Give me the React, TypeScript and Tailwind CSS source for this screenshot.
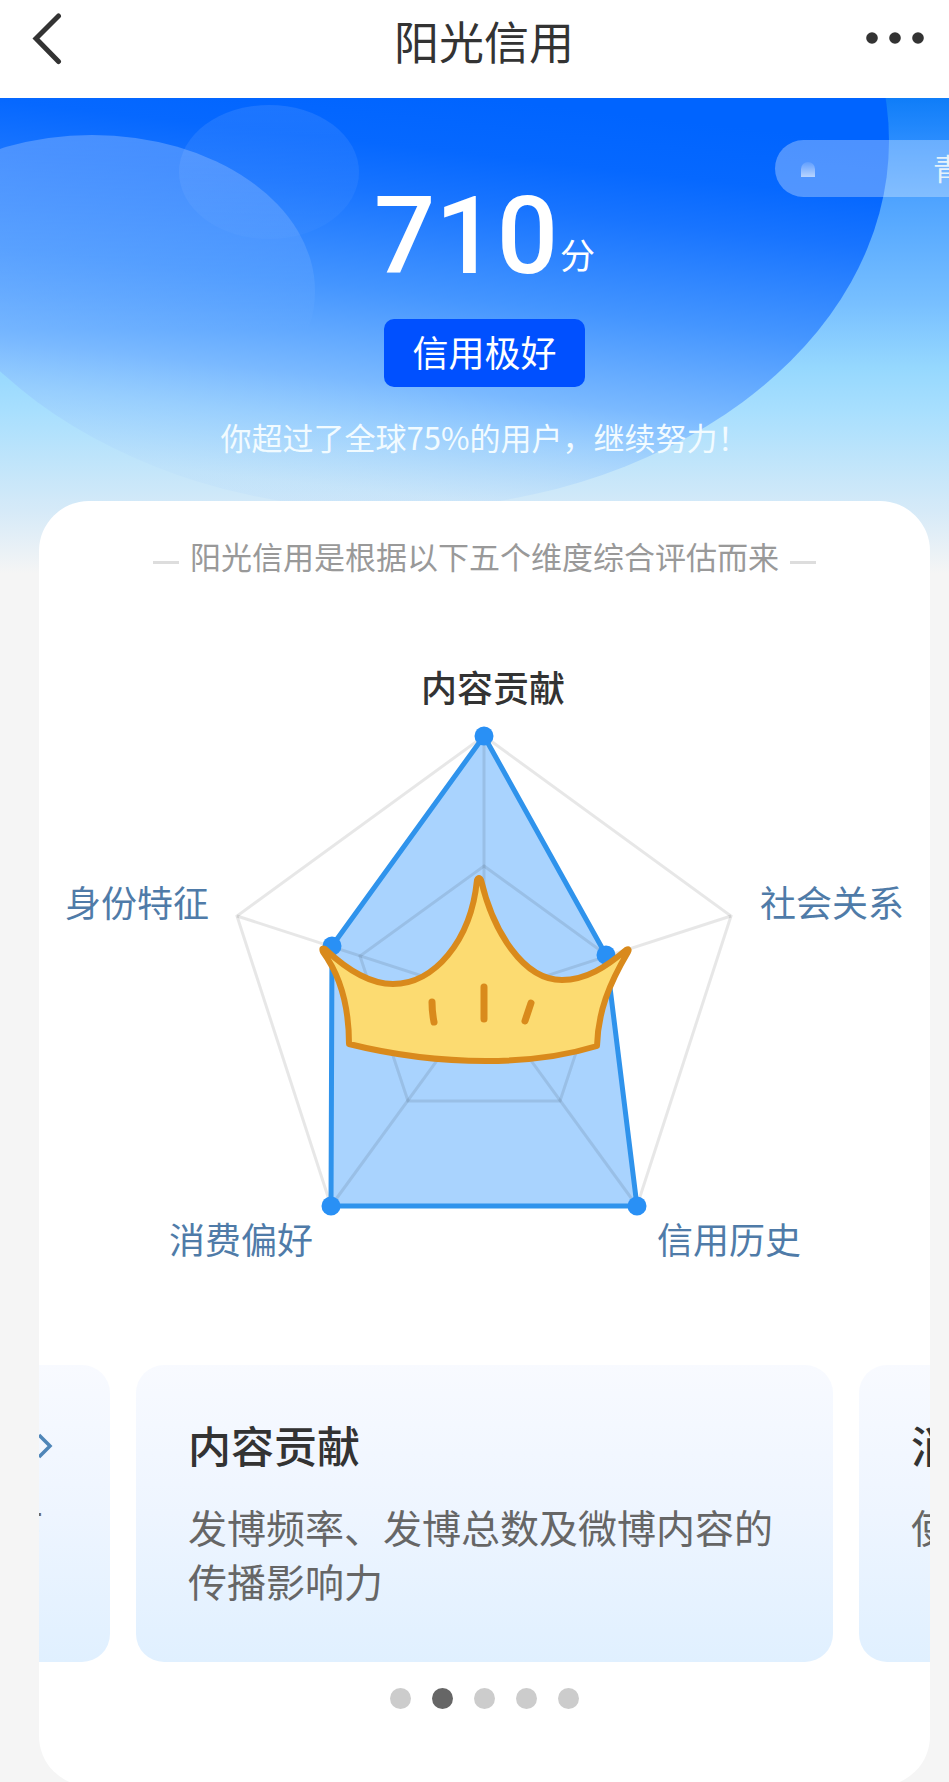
import React from "react";

const axisLabels = [
  { text: "内容贡献", x: 382, y: 126, active: true },
  { text: "社会关系", x: 721, y: 341, active: false },
  { text: "信用历史", x: 618, y: 678, active: false },
  { text: "消费偏好", x: 130, y: 678, active: false },
  { text: "身份特征", x: 26, y: 341, active: false },
];

const dataPoints = [
  [445, 160],
  [567, 379],
  [598, 630],
  [292, 630],
  [293, 370],
];

const outer = [
  [445, 160],
  [692, 340],
  [598, 630],
  [292, 630],
  [198, 340],
];

const toPoints = (list: number[][]) => list.map((p) => p.join(",")).join(" ");

function Header() {
  return (
    <header className="flex h-[98px] shrink-0 items-center justify-between bg-white pr-[19px] pb-[20px] pl-[28px]">
      <button type="button" aria-label="返回" className="flex w-[74px] items-center">
        <svg width="36" height="52" viewBox="0 0 36 52" fill="none">
          <path d="M30.500 3 8 25.500 30.500 48.500" stroke="#333" strokeWidth="5" strokeLinecap="round" />
        </svg>
      </button>
      <h1 className="pt-[3px] text-[45px] leading-[54px] text-[#333]">阳光信用</h1>
      <button type="button" aria-label="更多" className="flex w-[64px] items-center">
        <svg width="60" height="14" viewBox="0 0 60 14" fill="#333">
          <circle cx="6" cy="6" r="5.800" />
          <circle cx="29" cy="6" r="5.800" />
          <circle cx="52" cy="6" r="5.800" />
        </svg>
      </button>
    </header>
  );
}

function Backdrop() {
  return (
    <svg
      className="absolute inset-x-0 top-0 h-[475px] w-full"
      viewBox="0 97 949 475"
      preserveAspectRatio="none"
      aria-hidden="true"
    >
      <defs>
        <linearGradient id="sky" gradientUnits="userSpaceOnUse" x1="0" y1="97" x2="0" y2="572">
          <stop offset="0" stopColor="#0f7df8" />
          <stop offset="0.11" stopColor="#3090ff" />
          <stop offset="0.22" stopColor="#50a4ff" />
          <stop offset="0.43" stopColor="#77bfff" />
          <stop offset="0.57" stopColor="#96d8fe" />
          <stop offset="0.66" stopColor="#a8dffe" />
          <stop offset="0.79" stopColor="#c5e6fa" />
          <stop offset="0.87" stopColor="#d6eaf8" />
          <stop offset="1" stopColor="#f5f5f5" />
        </linearGradient>
        <linearGradient id="dome" gradientUnits="userSpaceOnUse" x1="480" y1="97" x2="435" y2="497">
          <stop offset="0" stopColor="#0064ff" />
          <stop offset="0.14" stopColor="#0668ff" />
          <stop offset="0.26" stopColor="#1874ff" />
          <stop offset="0.5" stopColor="#4495ff" />
          <stop offset="0.73" stopColor="#7ab9ff" />
          <stop offset="0.84" stopColor="#93c8fe" stopOpacity="0.700" />
          <stop offset="1" stopColor="#b0d6fb" stopOpacity="0.200" />
        </linearGradient>
        <linearGradient id="bubble" gradientUnits="userSpaceOnUse" x1="0" y1="134" x2="0" y2="330">
          <stop offset="0" stopColor="#fff" stopOpacity="0.240" />
          <stop offset="0.5" stopColor="#fff" stopOpacity="0.130" />
          <stop offset="1" stopColor="#fff" stopOpacity="0" />
        </linearGradient>
        <linearGradient id="spark" gradientUnits="userSpaceOnUse" x1="0" y1="104" x2="0" y2="238">
          <stop offset="0" stopColor="#fff" stopOpacity="0.100" />
          <stop offset="1" stopColor="#fff" stopOpacity="0.020" />
        </linearGradient>
      </defs>
      <rect x="0" y="97" width="949" height="475" fill="url(#sky)" />
      <ellipse cx="390" cy="140" rx="499" ry="369" fill="url(#dome)" />
      <ellipse cx="269" cy="171" rx="90" ry="67" fill="url(#spark)" />
      <ellipse cx="92" cy="290" rx="223" ry="156" fill="url(#bubble)" />
    </svg>
  );
}

function RadarChart() {
  return (
    <svg className="block h-auto w-full" viewBox="0 0 891 789" role="img" aria-label="五个维度雷达图">
      <polygon points={toPoints(dataPoints)} fill="#a9d3fe" />
      <g stroke="#000" strokeOpacity="0.095" strokeWidth="3" fill="none">
        <polygon points={toPoints(outer)} />
        <polygon points="445,290 569,380 521,525 369,525 321,380" />
        {outer.map(([x, y]) => (
          <line key={`${x}-${y}`} x1="445" y1="420" x2={x} y2={y} />
        ))}
      </g>
      <polygon points={toPoints(dataPoints)} fill="none" stroke="#2f93ec" strokeWidth="5" strokeLinejoin="round" />
      {dataPoints.map(([x, y]) => (
        <circle key={`${x}-${y}`} cx={x} cy={y} r="9.500" fill="#2990f5" />
      ))}
      <g stroke="#d98a1c" strokeLinecap="round" strokeLinejoin="round">
        <path
          d="M286 373C305 391 329 408 354 408C395 408 432 365 438 304Q440 300 442 304C454 355 484 404 523 404C547 404 567 391 587 374Q591 372 589 376C570 408 559 436 558 470C522 481 485 485 447 485C400 485 354 479 310 468C310 434 303 402 284 376Q282 371 286 373Z"
          fill="#fcdb71"
          strokeWidth="6"
        />
        <path d="M393 426Q393 436 395 446M445 411V443M492 427Q489 436 486 445" fill="none" strokeWidth="7" />
      </g>
      {axisLabels.map((label) => (
        <text
          key={label.text}
          x={label.x}
          y={label.y}
          className={label.active ? "fill-[#333] text-[36px] font-medium" : "fill-[#4f7ba8] text-[36px]"}
        >
          {label.text}
        </text>
      ))}
    </svg>
  );
}

function Slide({ title, children }: { title: React.ReactNode; children: React.ReactNode }) {
  return (
    <article className="w-[calc(100%-194px)] shrink-0 rounded-[28px] bg-linear-to-b from-[#f8faff] via-[#eef5ff] to-[#e0f0ff] px-[52px] pt-[52px] pb-[55px]">
      {title}
      <div className="mt-[28px] text-[39px] leading-[54px] text-[#666]">{children}</div>
    </article>
  );
}

function Carousel() {
  return (
    <div className="flex justify-center gap-[26px] overflow-hidden">
      <Slide
        title={
          <div className="flex h-[54px] items-center justify-end pt-[4px] pr-[5px]">
            <svg width="16" height="28" viewBox="0 0 16 28" fill="none" aria-hidden="true">
              <path d="M2 3 13 14 2 25" stroke="#4f86b8" strokeWidth="3.500" />
            </svg>
          </div>
        }
      >
        <p className="pr-[15px] text-right">下</p>
      </Slide>
      <Slide title={<h2 className="text-[43px] leading-[54px] font-medium text-[#333]">内容贡献</h2>}>
        <p>发博频率、发博总数及微博内容的传播影响力</p>
      </Slide>
      <Slide title={<h2 className="text-[43px] leading-[54px] font-medium text-[#333]">消费偏好</h2>}>
        <p>使</p>
      </Slide>
    </div>
  );
}

function Pager() {
  return (
    <nav aria-label="维度切换" className="mt-[26px] flex justify-center gap-[21px]">
      {[0, 1, 2, 3, 4].map((i) => (
        <button
          key={i}
          type="button"
          aria-label={`第${i + 1}页`}
          aria-current={i === 1}
          className={i === 1 ? "size-[21px] rounded-full bg-[#666]" : "size-[21px] rounded-full bg-[#ccc]"}
        />
      ))}
    </nav>
  );
}

export default function App() {
  return (
    <div className="flex h-screen flex-col bg-[#f5f5f5] font-['Noto_Sans_CJK_SC','Noto_Sans',sans-serif]">
      <Header />
      <main className="relative flex-1 overflow-x-hidden overflow-y-auto [scrollbar-width:none]">
        <Backdrop />
        <button
          type="button"
          className="absolute top-[42px] right-0 flex h-[57px] w-[174px] items-center justify-end overflow-hidden rounded-l-full bg-white/30 pb-[3px] text-[30px] text-white"
        >
          <span className="mt-[4px] mr-auto ml-[26px] h-[15px] w-[14px] rounded-t-full bg-linear-to-b from-white/10 to-white/60" aria-hidden="true" />
          <span className="-mr-[14px] text-[#e4f2fb]">青</span>
        </button>
        <div className="relative pr-[19px] pl-[39px]">
          <section className="pointer-events-none flex flex-col items-center pt-[90px] text-white">
            <p className="flex items-end gap-[2px]">
              <strong className="font-['Roboto',sans-serif] text-[108px] leading-[96px] font-medium">710</strong>
              <span className="text-[35px] leading-[60px]">分</span>
            </p>
            <p className="mt-[35px] flex h-[68px] items-center rounded-[10px] bg-[#0050ff] px-[28px] pb-[5px] text-[36px]">信用极好</p>
            <p className="mt-[30px] text-[31px] leading-[40px] text-[#f2fbff]">你超过了全球75%的用户，继续努力！</p>
          </section>
          <section className="mt-[44px] overflow-hidden rounded-[50px] bg-white pt-[35px] pb-[77px]">
            <h2 className="flex items-center justify-center gap-[11px] text-[31px] leading-[40px] text-[#999]">
              <span className="mt-[12px] h-[3px] w-[26px] bg-[#ddd]" />
              阳光信用是根据以下五个维度综合评估而来
              <span className="mt-[12px] h-[3px] w-[26px] bg-[#ddd]" />
            </h2>
            <RadarChart />
            <Carousel />
            <Pager />
          </section>
        </div>
      </main>
    </div>
  );
}
